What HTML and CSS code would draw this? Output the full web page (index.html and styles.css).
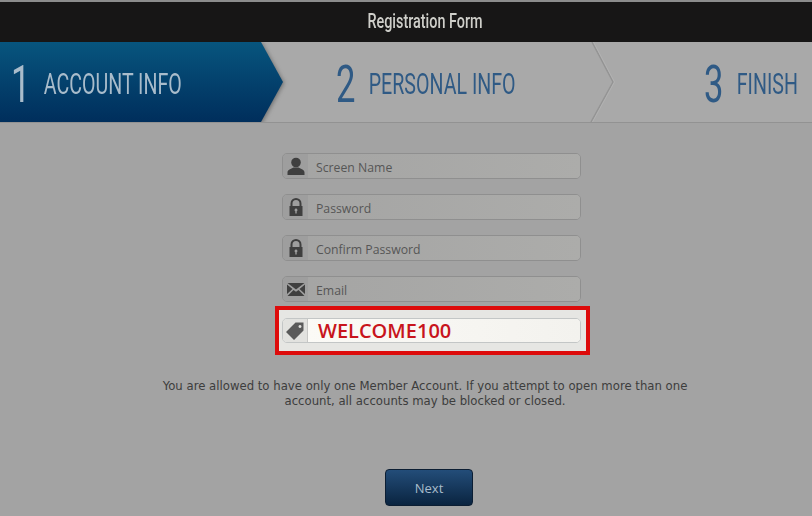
FILE: index.html
```html
<!DOCTYPE html>
<html lang="en">
<head>
<meta charset="utf-8">
<title>Registration Form</title>
<link rel="stylesheet" href="styles.css">
</head>
<body>
<header class="topbar"><span class="title">Registration Form</span></header>
<nav class="steps">
  <div class="step step-active"><div class="squeeze"><span class="num">1</span><span class="label">ACCOUNT INFO</span></div></div>
  <div class="step step-two"><div class="squeeze"><span class="num">2</span><span class="label">PERSONAL INFO</span></div>
    <svg class="chevron" width="26" height="80" viewBox="0 0 26 80"><path d="M2 0 L23 40 L1 80" fill="none" stroke="#949494" stroke-width="1.500"/><path d="M3.500 0 L24.500 40 L2.500 80" fill="none" stroke="#b2b2b2" stroke-width="1"/></svg>
  </div>
  <div class="step step-three"><div class="squeeze"><span class="num">3</span><span class="label">FINISH</span></div></div>
</nav>
<main class="form">
  <div class="field">
    <span class="icon"><svg width="18" height="18" viewBox="0 0 18 18"><circle cx="9" cy="5.500" r="4.800" fill="#3f3f3f"/><path d="M0.500 18 V15.500 C0.500 12.500 4 12 6.500 10.500 H11.500 C14 12 17.500 12.500 17.500 15.500 V18 Z" fill="#3f3f3f"/></svg></span>
    <span class="text">Screen Name</span>
  </div>
  <div class="field">
    <span class="icon"><svg width="16" height="18" viewBox="0 0 16 18"><path d="M3.500 8 V5.500 a4.500 4.500 0 0 1 9 0 V8" fill="none" stroke="#3f3f3f" stroke-width="2"/><path fill-rule="evenodd" d="M1.500 8 H14.500 V18 H1.500 Z M8 10.500 a1.500 1.500 0 0 0 -0.700 2.800 V15.500 H8.700 V13.300 A1.500 1.500 0 0 0 8 10.500 Z" fill="#3f3f3f"/></svg></span>
    <span class="text">Password</span>
  </div>
  <div class="field">
    <span class="icon"><svg width="16" height="18" viewBox="0 0 16 18"><path d="M3.500 8 V5.500 a4.500 4.500 0 0 1 9 0 V8" fill="none" stroke="#3f3f3f" stroke-width="2"/><path fill-rule="evenodd" d="M1.500 8 H14.500 V18 H1.500 Z M8 10.500 a1.500 1.500 0 0 0 -0.700 2.800 V15.500 H8.700 V13.300 A1.500 1.500 0 0 0 8 10.500 Z" fill="#3f3f3f"/></svg></span>
    <span class="text">Confirm Password</span>
  </div>
  <div class="field">
    <span class="icon"><svg width="18" height="13" viewBox="0 0 18 13"><path d="M0.500 0 H17.500 L9 6.500 Z" fill="#3f3f3f"/><path d="M0 1.500 L5.500 6 L0 11 Z M18 1.500 L12.500 6 L18 11 Z" fill="#3f3f3f"/><path d="M0.500 13 L6.500 7 L9 8.800 L11.500 7 L17.500 13 Z" fill="#3f3f3f"/></svg></span>
    <span class="text">Email</span>
  </div>
  <div class="promo">
    <div class="field field-light">
      <span class="icon"><svg width="18" height="18" viewBox="0 0 18 18"><path fill-rule="evenodd" d="M9.500 0.500 H17.500 V8.500 L8 18 L0 10 Z M14 3 a1.500 1.500 0 1 0 0.010 0 Z" fill="#5a5a5a"/></svg></span>
      <span class="code">WELCOME100</span>
    </div>
  </div>
  <p class="notice">You are allowed to have only one Member Account. If you attempt to open more than one account, all accounts may be blocked or closed.</p>
  <button class="next" type="button">Next</button>
</main>
</body>
</html>
```
FILE: styles.css
```css
* { box-sizing: border-box; }
html, body { margin: 0; height: 100%; }
body {
  width: 812px;
  height: 516px;
  overflow: hidden;
  background: #a3a3a3;
  font-family: "DejaVu Sans", sans-serif;
  border-top: 2px solid #8c8c8c;
}
.topbar {
  height: 40px;
  background: #171616;
  color: #cfcfca;
  font-family: "Roboto", sans-serif;
  font-size: 20px;
  font-weight: 500;
  line-height: 39px;
  text-align: center;
  padding-left: 38px;
}
.title { display: inline-block; transform: scaleX(0.72); }
.steps {
  height: 81px;
  display: flex;
  background: #a9a9a9;
  border-bottom: 1px solid #929292;
  font-family: "Roboto", sans-serif;
  color: #2f5a85;
  overflow: hidden;
}
.step { flex: none; display: flex; align-items: center; height: 80px; padding-top: 5px; position: relative; }
.squeeze {
  display: flex;
  flex: none;
  align-items: center;
  gap: 20px;
  white-space: nowrap;
  transform: scaleX(0.665);
  transform-origin: left center;
}
.num { font-size: 52px; line-height: 75px; font-weight: 400; }
.label { font-size: 29.500px; line-height: 75px; font-weight: 400; }
.step-active {
  width: 285px;
  padding-left: 11px;
  color: #a9bccb;
  filter: drop-shadow(1px 1px 2px #6c6c6c);
}
.step-active::before {
  content: "";
  position: absolute;
  inset: 0;
  z-index: -1;
  background: linear-gradient(#07557e, #002e5c);
  clip-path: polygon(0 0, 261px 0, 283px 40px, 261px 80px, 0 80px);
}
.step-two { width: 346px; padding-left: 51px; }
.chevron { position: absolute; left: 305px; top: 0; }
.step-three { width: 181px; padding-left: 73px; }
.form {
  width: 299px;
  margin: 30px 0 0 282px;
  display: flex;
  flex-direction: column;
  align-items: stretch;
}
.field {
  height: 26px;
  margin-bottom: 15px;
  display: flex;
  align-items: stretch;
  border: 1px solid #8f8f8f;
  border-radius: 5px;
  background: #a8a8a7;
  overflow: hidden;
  color: #565656;
}
.icon {
  width: 25px;
  flex: none;
  display: flex;
  align-items: center;
  justify-content: center;
  background: #9e9e9e;
}
.text {
  flex: 1;
  padding: 1px 0 0 8px;
  line-height: 26px;
  font-family: "Open Sans", sans-serif;
  font-size: 12.250px;
  background: linear-gradient(90deg, #a5a5a4, #acacaa);
}
.promo {
  margin: -11px -9px 0 -7px;
  border: 4px solid #dd0b0b;
  background: #e6e6e3;
  padding: 8px 5px 8px 3px;
  height: 49px;
}
.field-light {
  height: 25px;
  margin: 0;
  border-color: #c3c6c6;
  background: #f4f3ef;
}
.field-light .icon { background: #e2e2df; border-right: 1px solid #c8c8c6; }
.code {
  flex: 1;
  padding-left: 10px;
  font-family: "Open Sans", sans-serif;
  font-size: 20px;
  font-weight: 600;
  line-height: 24px;
  color: #c8141c;
  background: linear-gradient(90deg, #fbfaf6, #f3f2ee);
}
.notice {
  width: 560px;
  margin: 24px 0 0 -137px;
  font-size: 11.700px;
  line-height: 15px;
  text-align: center;
  color: #3d3d3d;
}
.next {
  width: 88px;
  height: 37px;
  margin: 60px 0 0 103px;
  align-self: flex-start;
  border: 1px solid #0c1e33;
  border-radius: 4px;
  background: linear-gradient(#234d79, #0a2440);
  color: #a9bccb;
  font-family: "Open Sans", sans-serif;
  font-size: 13px;
  padding: 0;
}
```
